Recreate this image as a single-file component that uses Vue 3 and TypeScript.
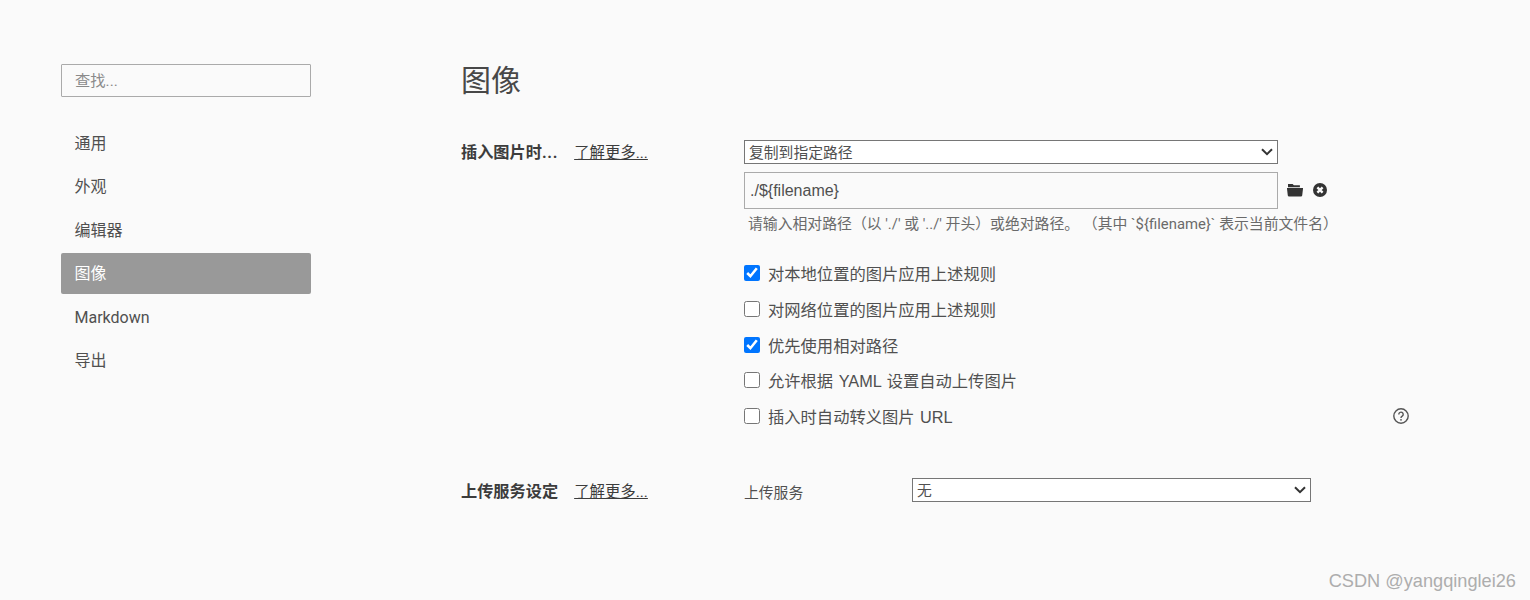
<script setup lang="ts">
const items: string[] = ['通用', '外观', '编辑器', '图像', 'Markdown', '导出']
const checks: { label: string; checked: boolean; help?: boolean }[] = [
  { label: '对本地位置的图片应用上述规则', checked: true },
  { label: '对网络位置的图片应用上述规则', checked: false },
  { label: '优先使用相对路径', checked: true },
  { label: '允许根据 YAML 设置自动上传图片', checked: false },
  { label: '插入时自动转义图片 URL', checked: false, help: true },
]
</script>

<template>
  <div class="page">
    <aside class="side">
      <input class="search" type="text" placeholder="查找..." />
      <nav class="nav">
        <div v-for="it in items" :key="it" class="nav-item" :class="{ active: it === '图像' }">{{ it }}</div>
      </nav>
    </aside>
    <main class="main">
      <h1 class="title">图像</h1>
      <section class="section first">
        <div class="label"><b>插入图片时<span class="dots">...</span></b><a class="more">了解更多...</a></div>
        <div class="controls">
          <div class="sel-wrap wide">
            <select class="sel"><option>复制到指定路径</option></select>
            <svg class="chev" width="12" height="8" viewBox="0 0 12 8"><path d="M1 1.2L6 6.2l5-5" fill="none" stroke="#333" stroke-width="2" /></svg>
          </div>
          <div class="path-row">
            <input class="path" type="text" value="./${filename}" />
            <svg class="folder" width="16" height="14" viewBox="0 0 16 14">
              <path fill="#333" d="M1 1h4.6l1.3 1.3h6v1.9H1zM0 5h16v.8l-.8 6.8a.9.9 0 0 1-.9.8H1.7a.9.9 0 0 1-.9-.8L0 5.8z" />
            </svg>
            <svg class="close" width="14" height="14" viewBox="0 0 14 14">
              <circle cx="7" cy="7" r="7" fill="#333" />
              <path d="M4.4 4.4l5.2 5.2M9.6 4.4l-5.2 5.2" stroke="#fafafa" stroke-width="2.4" fill="none" />
            </svg>
          </div>
          <div class="hint">请输入相对路径（以 './' 或 '../' 开头）或绝对路径。 （其中 `${filename}` 表示当前文件名）</div>
          <div class="checks">
            <label v-for="c in checks" :key="c.label" class="check">
              <input type="checkbox" :checked="c.checked" />
              <span>{{ c.label }}</span>
              <svg v-if="c.help" class="help" width="16" height="16" viewBox="0 0 16 16">
                <circle cx="8" cy="8" r="7.2" fill="none" stroke="#555" stroke-width="1.4" />
                <path d="M5.8 6.4a2.2 2.2 0 1 1 3.4 1.8c-.8.5-1.2.9-1.2 1.7" fill="none" stroke="#555" stroke-width="1.4" />
                <circle cx="8" cy="11.8" r=".9" fill="#555" />
              </svg>
            </label>
          </div>
        </div>
      </section>
      <section class="section second">
        <div class="label"><b>上传服务设定</b><a class="more">了解更多...</a></div>
        <div class="service">
          <span class="svc-label">上传服务</span>
          <div class="sel-wrap svc">
            <select class="sel"><option>无</option></select>
            <svg class="chev" width="12" height="8" viewBox="0 0 12 8"><path d="M1 1.2L6 6.2l5-5" fill="none" stroke="#333" stroke-width="2" /></svg>
          </div>
        </div>
      </section>
    </main>
    <div class="mark">CSDN @yangqinglei26</div>
  </div>
</template>

<style>
html, body { margin: 0; background: #fafafa; }
</style>

<style scoped>
.page {
  position: relative;
  height: 600px;
  overflow: hidden;
  display: flex;
  background: #fafafa;
  color: #505050;
  font-family: Roboto, "Noto Sans CJK SC", sans-serif;
  font-size: 16px;
}
.side { width: 250px; margin-left: 61px; padding-top: 64px; flex: none; }
.search {
  display: block;
  box-sizing: border-box;
  width: 250px;
  height: 33px;
  padding: 0 13px;
  border: 1px solid #aaa;
  border-radius: 1px;
  background: #fafafa;
  font: 15.3px Roboto, "Noto Sans CJK SC", sans-serif;
  outline: none;
}
.search::placeholder { color: #8a8a8a; }
.nav { margin-top: 26px; display: flex; flex-direction: column; gap: 2.4px; }
.nav-item {
  height: 41px;
  line-height: 41px;
  padding-left: 13.5px;
  border-radius: 2px;
  font-size: 16px;
  color: #505050;
}
.nav-item.active { background: #999; color: #fff; }
.main { margin-left: 150px; flex: 1; }
.title { margin: 0; padding-top: 58px; height: 46px; line-height: 46px; font-size: 30px; font-weight: 400; color: #484848; }
.section { display: flex; }
.first { margin-top: 36px; }
.second { margin-top: 49.5px; }
.second .label { padding-top: 1px; }
.label { width: 283px; flex: none; display: flex; gap: 16px; align-items: baseline; line-height: 26px; color: #3c3c3c; font-size: 16.2px; }
.label b { font-weight: 700; }
.dots { letter-spacing: 0.7px; }
.more { color: #3c3c3c; font-size: 15.4px; text-decoration: underline; }
.controls { width: 665px; display: flex; flex-direction: column; }
.sel-wrap { position: relative; height: 24px; }
.chev { position: absolute; right: 5px; top: 8px; pointer-events: none; }
.sel {
  display: block;
  width: 100%;
  height: 24px;
  box-sizing: border-box;
  padding: 2px 0 0 4px;
  border: 1px solid #767676;
  border-radius: 0;
  appearance: none;
  background-color: #fff;
  color: #505050;
  font: 14.8px Roboto, "Noto Sans CJK SC", sans-serif;
  outline: none;
}
.wide { width: 534px; }
.path-row { display: flex; align-items: center; margin-top: 8px; }
.path {
  box-sizing: border-box;
  width: 534px;
  height: 37px;
  padding: 0 5px;
  border: 1px solid #aaa;
  background: #fafafa;
  color: #505050;
  font: 16px "Liberation Sans", "Noto Sans CJK SC", sans-serif;
  outline: none;
}
.folder { margin: 0 0 2px 9px; }
.close { margin: 0 0 2px 10px; }
.hint { margin: 6px 0 0 4px; line-height: 18px; font-size: 14.85px; color: #6a6a6a; white-space: nowrap; }
.checks { margin-top: 28px; display: flex; flex-direction: column; gap: 11.75px; }
.check { display: flex; align-items: center; height: 24px; font-family: "Liberation Sans", "Noto Sans CJK SC", sans-serif; font-size: 16.3px; word-spacing: 1px; color: #505050; }
.check input { width: 16px; height: 16px; margin: 0 8px 0 0; flex: none; }
.help { margin-left: auto; }
.service { display: flex; align-items: center; height: 24px; }
.svc-label { width: 168px; flex: none; padding-top: 3px; font-size: 14.8px; color: #505050; }
.svc { width: 399px; }
.mark {
  position: absolute;
  right: 14px;
  top: 568px;
  font-size: 18.2px;
  line-height: 26px;
  color: #adadad;
  font-family: "Liberation Sans", sans-serif;
}
</style>
